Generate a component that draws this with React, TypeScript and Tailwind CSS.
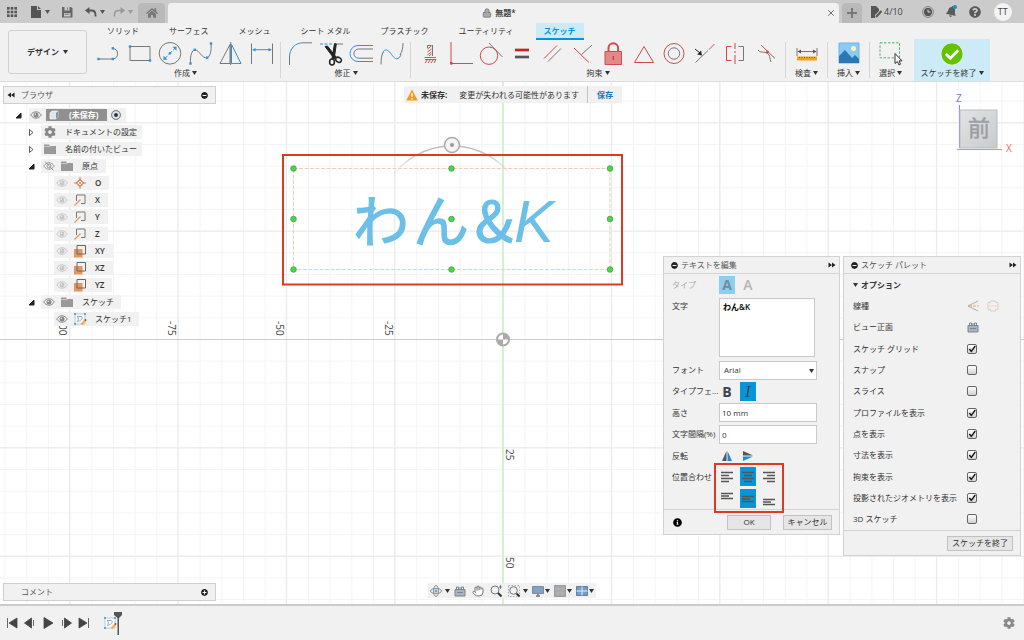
import type { ReactNode } from "react";
import { Hand, Lock, X } from "lucide-react";
import { FaBell, FaCheckCircle, FaCog, FaHome, FaInfoCircle, FaMinusCircle, FaPlusCircle, FaQuestionCircle } from "react-icons/fa";

const RED = "#d2494b";
const BLUE = "#2b95e0";
const GRAY = "#777";

const tabs = ["ソリッド", "サーフェス", "メッシュ", "シート メタル", "プラスチック", "ユーティリティ", "スケッチ"];

const options = [
  { id: "grid", label: "スケッチ グリッド", checked: true },
  { id: "snap", label: "スナップ", checked: false },
  { id: "slice", label: "スライス", checked: false },
  { id: "profile", label: "プロファイルを表示", checked: true },
  { id: "points", label: "点を表示", checked: true },
  { id: "dimensions", label: "寸法を表示", checked: true },
  { id: "constraints", label: "拘束を表示", checked: true },
  { id: "projected", label: "投影されたジオメトリを表示", checked: true },
  { id: "sketch3d", label: "3D スケッチ", checked: false },
];

function Icon({ children, className = "size-6", box = 24 }: { children: ReactNode; className?: string; box?: number }) {
  return (
    <svg viewBox={`0 0 ${box} ${box}`} className={`shrink-0 ${className}`} fill="none" stroke={GRAY} aria-hidden="true">
      {children}
    </svg>
  );
}

function Caret({ className = "text-[#333]" }: { className?: string }) {
  return (
    <svg viewBox="0 0 5 4" className={`h-1 w-[5px] shrink-0 ${className}`} fill="currentColor" aria-hidden="true">
      <path d="M0 0h5L2.500 4z" />
    </svg>
  );
}

function Dot({ x, y }: { x: number; y: number }) {
  return <rect x={x - 1.200} y={y - 1.200} width="2.400" height="2.400" fill={BLUE} stroke="none" />;
}

const createTools = [
  {
    name: "線分",
    icon: (
      <Icon>
        <path d="M1 17h15M16 6.500a5.300 5.300 0 0 1 0 10.500" />
        <Dot x={1.500} y={17} />
        <Dot x={15.800} y={17} />
        <Dot x={15.800} y={6.300} />
      </Icon>
    ),
  },
  {
    name: "長方形",
    icon: (
      <Icon>
        <path d="M2 4.500h20v14H2z" />
        <Dot x={2} y={4.500} />
        <Dot x={22} y={18.500} />
      </Icon>
    ),
  },
  {
    name: "円",
    icon: (
      <Icon>
        <circle cx="12" cy="11.300" r="10.800" />
        <path d="M6 17.300l12-12" stroke={BLUE} strokeDasharray="5 1.500" />
        <path d="M5.500 17.800v-4l4 4zM18.500 4.800v4l-4-4z" fill={BLUE} stroke="none" />
        <circle cx="12" cy="11.300" r="1.300" fill={BLUE} stroke="none" />
      </Icon>
    ),
  },
  {
    name: "スプライン",
    icon: (
      <Icon>
        <path d="M1.500 21.500C1 14 3 7.500 6 7.800c4 0 7 9 12 8 3.500-1 4.500-8 4-14" />
        <Dot x={1.500} y={21.500} />
        <Dot x={5.800} y={7.800} />
        <Dot x={18.200} y={15.700} />
        <Dot x={22} y={1.500} />
      </Icon>
    ),
  },
  {
    name: "ミラー",
    icon: (
      <Icon>
        <path d="M11 2.500v19H1z" />
        <path d="M12.500 2.500v19H22z" stroke={BLUE} />
        <path d="M11.700 0v23" />
      </Icon>
    ),
  },
  {
    name: "スケッチ寸法",
    icon: (
      <Icon>
        <path d="M1.500 1.500v20.500M22.500 1.500v20.500" />
        <path d="M3 7.700h18" stroke={BLUE} />
        <path d="M2 7.700l3.500-1.700v3.400zM22 7.700L18.500 6v3.400z" fill={BLUE} stroke="none" />
      </Icon>
    ),
  },
];

const modifyTools = [
  {
    name: "フィレット",
    icon: (
      <Icon>
        <path d="M1.500 23v-8M15 .8h9" />
        <path d="M1.500 15C1.500 7 7 .8 15 .8" stroke={BLUE} />
      </Icon>
    ),
  },
  {
    name: "トリム",
    icon: (
      <Icon>
        <path d="M1 2h12" stroke={BLUE} strokeDasharray="3 1.500" />
        <path d="M17 2h7" />
        <path d="M6 4.500l9.500 12.500 1.500-2L8.500 4zM15.500 1.500l-2.500 15 2.300-.5 2-14z" fill="#222" stroke="#222" />
        <ellipse cx="13" cy="20" rx="2.400" ry="3" stroke="#222" strokeWidth="1.500" />
        <ellipse cx="19.500" cy="17.800" rx="3" ry="2.300" stroke="#222" strokeWidth="1.500" transform="rotate(35 19.500 17.800)" />
      </Icon>
    ),
  },
  {
    name: "オフセット",
    icon: (
      <Icon>
        <path d="M24 3.500H9a8 8 0 0 0 0 16h15" stroke={BLUE} />
        <path d="M24 7H9.500a4.600 4.600 0 0 0 0 9.200H24" />
      </Icon>
    ),
  },
  {
    name: "曲線",
    icon: (
      <Icon>
        <path d="M1 22.500c0-5 .5-9 2-12M20 13c2-3 3-7 3-12" />
        <path d="M2.500 11.500c1.500-4 4-5 7-1.500 3 3 5 8 8.500 6.500 1.500-.7 2.300-2 3-4" stroke={BLUE} />
      </Icon>
    ),
  },
];

const constraintTools = [
  {
    name: "水平/垂直",
    icon: (
      <Icon>
        <path d="M9.500 3.500h4M9.500 7l4-3M9.500 10l4-3M9.500 13l4-3M11 14l2.500-2M9.500 3.500V6" stroke={RED} />
        <path d="M14.500 3v11M6.500 15.500h11.500" />
        <path d="M7 21l2.500-3.500M10 21l2.500-3.500M13 21l2.500-3.500M16 21l2-3.500M7 17.500h11" stroke={RED} />
      </Icon>
    ),
  },
  {
    name: "一致",
    icon: (
      <Icon>
        <path d="M2 0v21" stroke={RED} />
        <path d="M2 21.500h22" />
        <rect x="1" y="20" width="2.600" height="2.600" fill={RED} stroke="none" />
      </Icon>
    ),
  },
  {
    name: "接線",
    icon: (
      <Icon>
        <circle cx="10" cy="13.700" r="8.700" stroke={RED} />
        <path d="M10 1l13.500 14" />
      </Icon>
    ),
  },
  {
    name: "等しい",
    icon: (
      <Icon>
        <path d="M5 8h14" stroke="#c62127" strokeWidth="2.700" />
        <path d="M5 15h14" stroke="#555" strokeWidth="2.700" />
      </Icon>
    ),
  },
  {
    name: "平行",
    icon: (
      <Icon>
        <path d="M4 16.500L17 3.500" stroke={RED} />
        <path d="M8 19.500l13-13" />
      </Icon>
    ),
  },
  {
    name: "直交",
    icon: (
      <Icon>
        <path d="M3 6l15 14.500" stroke={RED} />
        <path d="M10.500 12.500L21 3" />
      </Icon>
    ),
  },
  {
    name: "固定",
    icon: (
      <Icon>
        <path d="M7.500 9.500V6a4.800 4.800 0 0 1 9.600 0v3.500" stroke={RED} strokeWidth="2" />
        <path d="M4 9.500h16.500v13H4z" fill="#e08a8b" stroke={RED} />
        <path d="M12.300 14v4" stroke="#c62127" />
      </Icon>
    ),
  },
  {
    name: "中点",
    icon: (
      <Icon>
        <path d="M2.500 20.500L12 4.500l9.500 16z" stroke={RED} />
      </Icon>
    ),
  },
  {
    name: "同心円",
    icon: (
      <Icon>
        <circle cx="12" cy="11.500" r="10" stroke={RED} />
        <circle cx="12" cy="11.500" r="5.700" />
      </Icon>
    ),
  },
  {
    name: "同一直線上",
    icon: (
      <Icon>
        <path d="M2.500 20.500L15 8.500" />
        <path d="M16 7.500L21.500 2" stroke={RED} />
        <path d="M2 7l5 4" stroke="#222" />
        <path d="M9 13.500l-4.800-1L8 8.500z" fill="#222" stroke="none" />
      </Icon>
    ),
  },
  {
    name: "対称",
    icon: (
      <Icon>
        <path d="M8.500 4.500h-5v14h5M12 1v6M12 9v2M12 13v9" stroke={RED} />
        <path d="M15.500 4.500h5v14h-5" />
      </Icon>
    ),
  },
  {
    name: "曲率",
    icon: (
      <Icon>
        <path d="M4 8c2 3 5 1.500 9 3 3 1.500 2.500 5 4 9" />
        <path d="M7 3l14 13.500" stroke={RED} />
        <circle cx="13.500" cy="10" r="1.500" fill={RED} stroke="none" />
      </Icon>
    ),
  },
];

function ToolGroup({ label, tools, width }: { label: string; tools: { name: string; icon: ReactNode }[]; width: string }) {
  return (
    <div className={`flex flex-col items-center gap-px ${width}`}>
      <div className="flex w-full justify-between">
        {tools.map((tool) => (
          <button key={tool.name} type="button" aria-label={tool.name}>
            {tool.icon}
          </button>
        ))}
      </div>
      <button type="button" className="flex items-center gap-[2px] leading-3">
        {label}
        <Caret />
      </button>
    </div>
  );
}

function SingleTool({ label, children, className = "w-[41px]" }: { label: string; children: ReactNode; className?: string }) {
  return (
    <button type="button" className={`flex flex-col items-center gap-px ${className}`}>
      {children}
      <span className="flex items-center gap-[2px] leading-3">
        {label}
        <Caret />
      </span>
    </button>
  );
}

function Divider() {
  return <div className="h-9 w-px shrink-0 bg-[#d5d5d5]" />;
}

function TitleBar() {
  return (
    <header className="flex h-[23px] items-end bg-[#cbcbcb] text-[#5a5a5a]">
      <div className="flex h-full w-[138px] items-center pl-[6px]">
        <button type="button" aria-label="データ パネル">
          <Icon box={12} className="size-3">
            {[1, 4.700, 8.400].map((y) =>
              [1, 4.700, 8.400].map((x) => (
                <rect key={`${x}-${y}`} x={x} y={y} width="2.600" height="2.600" fill="#555" stroke="none" />
              )),
            )}
          </Icon>
        </button>
        <button type="button" aria-label="ファイル" className="ml-3 flex items-center gap-[3px]">
          <Icon box={12} className="size-3">
            <path d="M1 0h6v4h4v8H1zM8 0l3 3H8z" fill="#555" stroke="none" />
          </Icon>
          <Caret className="text-[#555]" />
        </button>
        <button type="button" aria-label="保存" className="ml-[11px]">
          <Icon box={12} className="size-3">
            <path d="M1 1h9l1.500 1.500v9H1z" fill="#666" stroke="none" />
            <path d="M3.500 1h5v3.500h-5zM3 7h6.500v3.500H3z" fill="#cbcbcb" stroke="none" />
            <path d="M3.500 8.200h5M6.500 1.500v2" />
          </Icon>
        </button>
        <button type="button" aria-label="元に戻す" className="ml-3 flex items-center gap-[3px]">
          <Icon box={12} className="size-3">
            <path d="M3 4.500h3.500c3 0 4 2 4 4.500v1.500" stroke="#555" strokeWidth="1.800" />
            <path d="M0 4.500L4.500 1v7z" fill="#555" stroke="none" />
          </Icon>
          <Caret className="text-[#555]" />
        </button>
        <button type="button" aria-label="やり直し" className="ml-2 flex items-center gap-[3px]">
          <Icon box={12} className="size-3">
            <path d="M9 4.500H5.500c-3 0-4 2-4 4.500v1.500" stroke="#999" strokeWidth="1.500" />
            <path d="M12 4.500L7.500 1v7z" fill="#999" stroke="none" />
          </Icon>
          <Caret className="text-[#999]" />
        </button>
      </div>
      <button type="button" aria-label="ホーム" className="flex h-5 w-[27px] items-center justify-center rounded-t bg-[#b9b9b9]">
        <FaHome className="size-3 text-[#777]" />
      </button>
      <div className="ml-[3px] flex h-5 flex-1 items-center justify-center rounded-t bg-[#f1f1f1] pr-[3px]">
        <div className="flex flex-1 items-center justify-center gap-[3px] pl-1 text-[8px] font-semibold text-[#444]">
          <Lock className="size-[10px] fill-[#aaa] text-[#777]" />
          無題*
        </div>
        <button type="button" aria-label="閉じる">
          <X className="size-[10px] text-[#555]" />
        </button>
      </div>
      <button type="button" aria-label="新しいデザイン" className="ml-[3px] flex h-5 w-5 items-center justify-center rounded-t bg-[#b9b9b9]">
        <Icon box={10} className="size-[10px]">
          <path d="M5 0v10M0 5h10" strokeWidth="2" />
        </Icon>
      </button>
      <div className="flex h-full w-[162px] items-center pl-2">
        <button type="button" className="flex items-center gap-[2px] text-[9px] text-[#444]">
          <Icon box={12} className="size-3">
            <path d="M1 0h5l3 3v2L5 9v3H1z" fill="#555" stroke="none" />
            <path d="M6 11l5.500-6" stroke="#555" strokeWidth="2" />
          </Icon>
          4/10
        </button>
        <button type="button" aria-label="ジョブ ステータス" className="ml-[19px]">
          <Icon box={12} className="size-3">
            <circle cx="6" cy="6" r="5.500" stroke="#777" strokeWidth=".8" />
            <circle cx="6" cy="6" r="4.200" fill="#555" stroke="none" />
            <path d="M6 3.500V6h2.500" stroke="#ddd" />
          </Icon>
        </button>
        <button type="button" aria-label="通知" className="relative ml-3">
          <FaBell className="size-[11px] rotate-12" />
          <span className="absolute -top-px right-0 size-1 rounded-full bg-[#0696d7]" />
        </button>
        <button type="button" aria-label="ヘルプ" className="ml-3">
          <FaQuestionCircle className="size-3" />
        </button>
        <button type="button" className="ml-[13px] size-[18px] rounded-full bg-[#f3f3f3] text-[9px] leading-[18px] text-[#444]">
          TT
        </button>
      </div>
    </header>
  );
}

function Toolbar() {
  return (
    <div className="flex h-[59px] border-b border-[#dcdcdc] bg-[#f1f1f1]">
      <button
        type="button"
        className="mt-[7px] ml-2 flex h-11 w-[79px] shrink-0 items-center justify-center gap-1 rounded-[3px] border border-[#d0d0d0] font-bold"
      >
        デザイン
        <Caret />
      </button>
      <div className="ml-[10px] flex flex-1 flex-col">
        <nav className="flex gap-[14px] pl-[2px]">
          {tabs.map((tab) => (
            <button
              key={tab}
              type="button"
              className={
                tab === "スケッチ"
                  ? "h-[17px] border-b-2 border-[#0696d7] bg-[#cdeaf7] px-2 font-bold text-[#0696d7]"
                  : "h-[17px] border-b-2 border-transparent px-2"
              }
            >
              {tab}
            </button>
          ))}
        </nav>
        <div className="flex flex-1">
          <div className="flex pt-[2px]">
            <ToolGroup label="作成" tools={createTools} width="mr-[6px] w-[177px]" />
            <Divider />
            <ToolGroup label="修正" tools={modifyTools} width="mr-[6px] ml-[7px] w-[116px]" />
            <Divider />
            <ToolGroup label="拘束" tools={constraintTools} width="mx-[7px] w-[360px]" />
            <Divider />
            <SingleTool label="検査">
              <Icon>
                <path d="M2 6v8M22 6v8M3 9.500h18" />
                <path d="M2.500 9.500L6 7.500v4zM21.500 9.500L18 7.500v4z" fill="#555" stroke="none" />
                <path d="M2 14.500h20v4H2z" fill="#f5a11c" stroke="none" />
                <path d="M4 15.500h17" stroke="#8a5a10" strokeDasharray="1 1.500" />
              </Icon>
            </SingleTool>
            <Divider />
            <SingleTool label="挿入">
              <Icon>
                <path d="M2 1h20v20H2z" fill="#8bcaf5" stroke="#73b5e3" />
                <path d="M2 14l6-6 7 8 3-3 4 4v4H2z" fill="#2b78b4" stroke="none" />
                <circle cx="16.500" cy="6.500" r="2.500" fill="#fff6b5" stroke="none" />
              </Icon>
            </SingleTool>
            <Divider />
            <SingleTool label="選択">
              <Icon>
                <path d="M1 .800h19.500v15H1z" stroke="#46bd68" strokeDasharray="2.500 1.500" />
                <path d="M16 11.500v10l2.300-2 1.700 3.500 1.500-.8-1.500-3.300h3z" fill="#fff" stroke="#333" />
              </Icon>
            </SingleTool>
          </div>
          <SingleTool label="スケッチを終了" className="-mt-px ml-[3px] w-[76px] bg-[#cdeaf7] pt-[3px]">
            <FaCheckCircle className="size-6 rounded-full border border-[#cdeaf7] bg-white text-[#62c400]" />
          </SingleTool>
        </div>
      </div>
    </div>
  );
}

function Eye({ tone = "#888" }: { tone?: string }) {
  return (
    <Icon box={12} className="size-3">
      <path d="M.7 6C3.500 1.700 8.500 1.700 11.300 6 8.500 10.300 3.500 10.300.7 6z" stroke={tone} fill="#f1f1f1" />
      <circle cx="6" cy="6" r="2.500" fill={tone} stroke="none" />
      <circle cx="5.300" cy="5.300" r=".7" fill="#eee" stroke="none" />
    </Icon>
  );
}

function HiddenEye() {
  return (
    <Icon box={12} className="size-3">
      <path d="M.7 6C3.500 1.700 8.500 1.700 11.300 6 8.500 10.300 3.500 10.300.7 6z" stroke="#888" strokeWidth=".8" />
      <circle cx="6" cy="6" r="2" stroke="#888" strokeWidth=".8" />
      <path d="M2 1.500l8.500 9" stroke="#888" strokeWidth=".8" />
    </Icon>
  );
}

function Folder() {
  return (
    <Icon box={12} className="size-3">
      <path d="M0 1.500h5l1 1.500h6v8H0z" fill="#999" stroke="none" />
      <path d="M0 3.500h6.500" stroke="#ddd" strokeWidth=".7" />
    </Icon>
  );
}

function SketchIcon() {
  return (
    <Icon box={14} className="size-[14px]">
      <path d="M2 2h10v10H2z" stroke="#9fc6df" fill="#fafcfe" strokeWidth=".8" />
      <path d="M4 4.500h4.500c2 2-1 4.500-4 5 1-2 1-3 0-5z" stroke="#7d95a8" strokeWidth=".8" />
      <path d="M8.500 12.500l3.500-4" stroke="#f3b23b" strokeWidth="2" />
      <circle cx="12.500" cy="8" r="1" fill="#d33" stroke="none" />
      <path d="M1 1h2v2H1zM11 1h2v2h-2zM1 11h2v2H1z" fill="#5ba9dc" stroke="none" />
    </Icon>
  );
}

function Twisty({ open = false }: { open?: boolean }) {
  return (
    <Icon box={7} className="size-[7px]">
      {open ? <path d="M6 1v5H1z" fill="#222" stroke="#222" /> : <path d="M1.500.5L5 3.500l-3.500 3z" stroke="#333" strokeWidth=".8" />}
    </Icon>
  );
}

const axisIcon = (
  <Icon box={14} className="size-[14px]">
    <path d="M3.500 2h8.500v8.500H8M3.500 2v6" />
    <path d="M1.500 12.500l6-6" stroke="#e79a68" strokeWidth="1.300" />
  </Icon>
);

const planeIcon = (
  <Icon box={14} className="size-[14px]">
    <path d="M1 5h8.500v8.500H1z" fill="#e59560" stroke="none" />
    <path d="M4 10V1.500h8.500V10z" stroke="#666" />
  </Icon>
);

const originIcon = (
  <Icon box={14} className="size-[14px]">
    <path d="M7 1v12M1 7h12" stroke="#d88455" />
    <path d="M7 3.500L10.500 7 7 10.500 3.500 7z" fill="#fff" stroke="#d88455" strokeWidth="1.300" />
    <circle cx="7" cy="7" r="1" fill="#d88455" stroke="none" />
  </Icon>
);

const originItems = [
  { name: "O", icon: originIcon },
  { name: "X", icon: axisIcon },
  { name: "Y", icon: axisIcon },
  { name: "Z", icon: axisIcon },
  { name: "XY", icon: planeIcon },
  { name: "XZ", icon: planeIcon },
  { name: "YZ", icon: planeIcon },
];

function Browser() {
  return (
    <aside className="absolute top-1 left-[3px] w-[213px]">
      <div className="flex h-[18px] items-center border border-[#cfcfcf] bg-[#f1f1f1] pr-[7px] pl-[3px]">
        <button type="button" aria-label="折りたたむ">
          <Icon box={8} className="size-2">
            <path d="M4 1.500v5L.5 4zM7.500 1.500v5L4 4z" fill="#222" stroke="none" />
          </Icon>
        </button>
        <h2 className="ml-[6px] flex-1 text-[#555]">ブラウザ</h2>
        <FaMinusCircle className="size-[7px] text-[#222]" />
      </div>
      <ul className="mt-1 flex flex-col gap-[3px]">
        <li className="ml-3 flex h-[14px] items-center gap-[7px]">
          <Twisty open />
          <div className="flex h-full items-center gap-1 bg-[#f1f1f1] px-[1px]">
            <Eye />
            <div className="flex h-3 w-[61px] items-center bg-[#909090] pl-[3px] font-bold text-white">
              <Icon box={10} className="size-[10px]">
                <path d="M1 3l2-2h6v6L7 9H1z" fill="#dde6ee" stroke="#fff" strokeWidth=".6" />
                <path d="M7 3l2-2v6L7 9z" fill="#8796a5" stroke="none" />
              </Icon>
              <span className="ml-[10px]">(未保存)</span>
            </div>
            <input
              type="radio"
              defaultChecked
              aria-label="アクティブ"
              className="mr-1 size-[10px] appearance-none rounded-full border border-[#888] bg-[#dde6f0] checked:bg-[#333] checked:shadow-[inset_0_0_0_2px_#dde6f0]"
            />
          </div>
        </li>
        <li className="ml-[25px] flex h-[14px] items-center gap-[6px]">
          <Twisty />
          <div className="flex h-full w-[101px] items-center gap-[9px] bg-[#f1f1f1] pl-[3px]">
            <FaCog className="size-3 text-[#888]" />
            ドキュメントの設定
          </div>
        </li>
        <li className="ml-[25px] flex h-[14px] items-center gap-[6px]">
          <Twisty />
          <div className="flex h-full w-[101px] items-center gap-[9px] bg-[#f1f1f1] pl-[3px]">
            <Folder />
            名前の付いたビュー
          </div>
        </li>
        <li className="ml-[25px] flex h-[14px] items-center gap-[6px]">
          <Twisty open />
          <div className="flex h-full items-center bg-[#f1f1f1] pr-2 pl-[2px]">
            <HiddenEye />
            <span className="ml-[6px] flex items-center gap-[9px]">
              <Folder />
              原点
            </span>
          </div>
        </li>
        {originItems.map((item) => (
          <li key={item.name} className="ml-[51px] flex h-[14px] w-fit items-center bg-[#f1f1f1] pr-2 pl-[2px] font-semibold">
            <Eye tone="#c8c8c8" />
            <span className="mr-2 ml-[5px]">{item.icon}</span>
            {item.name}
          </li>
        ))}
        <li className="ml-[25px] flex h-[14px] items-center gap-[6px]">
          <Twisty open />
          <div className="flex h-full items-center bg-[#f1f1f1] pr-[7px] pl-[2px]">
            <Eye />
            <span className="ml-[6px] flex items-center gap-[9px]">
              <Folder />
              スケッチ
            </span>
          </div>
        </li>
        <li className="ml-[51px] flex h-[14px] w-fit items-center bg-[#f1f1f1] pr-[7px] pl-[2px]">
          <Eye />
          <span className="mr-2 ml-[5px]">
            <SketchIcon />
          </span>
          スケッチ1
        </li>
      </ul>
    </aside>
  );
}

const handles = [
  [293.500, 168.500],
  [451.500, 168.500],
  [610, 168.500],
  [293.500, 219],
  [451.500, 219],
  [610, 219],
  [293.500, 269.500],
  [451.500, 269.500],
  [610, 269.500],
];

const rulerLabels = [
  { text: "00", x: 59, y: 324 },
  { text: "-75", x: 168, y: 321 },
  { text: "-50", x: 276, y: 321 },
  { text: "-25", x: 385, y: 321 },
  { text: "25", x: 506, y: 449 },
  { text: "50", x: 506, y: 557 },
];

function SketchCanvas() {
  return (
    <svg viewBox="0 82 1024 522" preserveAspectRatio="xMidYMid slice" className="absolute inset-0 size-full">
      <defs>
        <pattern id="minor" x="503" y="339" width="21.670" height="21.670" patternUnits="userSpaceOnUse">
          <path d="M0 0h21.670M0 0v21.670" stroke="#f4f4f4" strokeWidth="2" />
        </pattern>
        <pattern id="major" x="502.500" y="339" width="108.350" height="108.350" patternUnits="userSpaceOnUse">
          <path d="M0 0h108.350M0 0v108.350" stroke="#e9e9e9" strokeWidth="2" />
        </pattern>
        <linearGradient id="arc">
          <stop offset="0" stopColor="#aaa" stopOpacity="0" />
          <stop offset=".3" stopColor="#bbb" />
          <stop offset=".7" stopColor="#bbb" />
          <stop offset="1" stopColor="#aaa" stopOpacity="0" />
        </linearGradient>
      </defs>
      <rect y="82" width="1024" height="522" fill="#fff" />
      <rect y="82" width="1024" height="522" fill="url(#minor)" />
      <rect y="82" width="1024" height="522" fill="url(#major)" />
      <path d="M503 82v522" stroke="#d2f2d2" strokeWidth="2" />
      <path d="M0 339.500h1024" stroke="#eebfc1" />

      <circle cx="503" cy="339.500" r="6" fill="#fff" stroke="#aaa" strokeWidth="2" />
      <path d="M503 339.500v-5.500a5.500 5.500 0 0 1 5.500 5.500zM503 339.500v5.500a5.500 5.500 0 0 1-5.500-5.500z" fill="#aaa" />

      {rulerLabels.map((label) => (
        <text key={label.text} transform={`translate(${label.x} ${label.y}) rotate(90)`} fontSize="10" fill="#444">
          {label.text}
        </text>
      ))}

      <text
        x="353"
        y="242"
        fontSize="56"
        fill="#6bbfe8"
        stroke="#6bbfe8"
        strokeWidth="1.200"
        fontFamily="Noto Sans CJK JP, sans-serif"
      >
        <tspan>わ</tspan>
        <tspan x="413">ん</tspan>
        <tspan x="475">&amp;</tspan>
        <tspan x="514" fontSize="60" fontStyle="italic" fontFamily="Liberation Sans, sans-serif" strokeWidth="0">
          K
        </tspan>
      </text>

      <path d="M391 178A74 74 0 0 1 513 178" fill="none" stroke="url(#arc)" strokeWidth="1.500" />
      <circle cx="452" cy="145" r="7.500" fill="#f4f4f4" stroke="#aaa" strokeWidth="1.500" />
      <circle cx="452" cy="145" r="2" fill="#999" />
      <path d="M293.500 168.500H610v101H293.500z" fill="none" stroke="#f2cdb3" strokeDasharray="4 1.500" />
      {handles.map(([x, y]) => (
        <circle key={`${x}-${y}`} cx={x} cy={y} r="2.800" fill="#3be03b" stroke="#5c8f5c" strokeWidth=".8" />
      ))}
      <path d="M283 155h339v129.500H283z" fill="none" stroke="#dc3a22" strokeWidth="2" />
    </svg>
  );
}

function UnsavedNotice() {
  return (
    <div role="status" className="absolute top-1 left-[404px] flex h-[17px] items-center bg-[#f1f1f1]">
      <Icon box={12} className="ml-[2px] size-3">
        <path d="M6 .5L11.800 11.500H.2z" fill="#f59b16" stroke="none" />
        <path d="M6 4v4M6 9v1.500" stroke="#fff" strokeWidth="1.300" />
      </Icon>
      <strong className="ml-[3px]">未保存:</strong>
      <span className="ml-3 whitespace-nowrap">変更が失われる可能性があります</span>
      <button type="button" className="ml-2 h-full border-l border-[#c4c4c4] px-[9px] font-semibold text-[#1277b5]">
        保存
      </button>
    </div>
  );
}

function ViewCube() {
  return (
    <svg viewBox="0 0 66 72" className="absolute top-[7px] right-[5px] h-[72px] w-[66px]" role="img" aria-label="ViewCube">
      <defs>
        <linearGradient id="face" x1="0" y1="0" x2="1" y2="1">
          <stop offset="0" stopColor="#e3e4e6" />
          <stop offset="1" stopColor="#c9cacd" />
        </linearGradient>
      </defs>
      <path d="M6.500 16v43" stroke="#8c86e0" />
      <path d="M4 60.500h45" stroke="#ec8a84" />
      <rect x="7" y="21" width="37" height="38" fill="url(#face)" stroke="#b9bbbe" />
      <text x="15" y="47" fontSize="22" fill="#9b9ea3" stroke="#9b9ea3" strokeWidth=".5">
        前
      </text>
      <text x="3" y="13" fontSize="10" fill="#7a72e0">
        Z
      </text>
      <text x="53" y="63" fontSize="10" fill="#ea6e66">
        X
      </text>
    </svg>
  );
}

function PanelHeader({ title }: { title: string }) {
  return (
    <div className="flex h-[17px] items-center border-b border-[#d2d2d2] px-[7px]">
      <FaMinusCircle className="size-[7px] text-[#222]" />
      <h2 className="ml-[3px] flex-1 text-[#555]">{title}</h2>
      <button type="button" aria-label="展開" className="-mr-1">
        <Icon box={8} className="size-2">
          <path d="M.5 1.500v5L4 4zM4 1.500v5L7.500 4z" fill="#222" stroke="none" />
        </Icon>
      </button>
    </div>
  );
}

const alignButtons = [
  [
    { name: "左揃え", active: false, d: "M2 5.500h12M2 8.500h8M2 11.500h12M2 14.500h8" },
    { name: "中央揃え", active: true, d: "M2 5.500h12M4 8.500h8M2 11.500h12M4 14.500h8" },
    { name: "右揃え", active: false, d: "M2 5.500h12M6 8.500h8M2 11.500h12M6 14.500h8" },
  ],
  [
    { name: "上揃え", active: false, d: "M2 4.500h12M2 7h8M2 9.500h12" },
    { name: "中段揃え", active: true, d: "M2 7.500h12M2 10h8M2 12.500h12" },
    { name: "下揃え", active: false, d: "M2 10.500h12M2 13h8M2 15.500h12" },
  ],
];

function AlignRow({ row }: { row: number }) {
  return (
    <div className="flex gap-[5px]">
      {alignButtons[row].map((button) => (
        <button
          key={button.name}
          type="button"
          aria-label={button.name}
          className={button.active ? "h-[19px] w-4 bg-[#0696d7]" : "h-[19px] w-4"}
        >
          <svg viewBox="0 0 16 19" className="h-[19px] w-4" stroke="#555" strokeWidth="1.300" aria-hidden="true">
            <path d={button.d} />
          </svg>
        </button>
      ))}
    </div>
  );
}

function TextPanel() {
  return (
    <section className="absolute top-[174px] right-[184px] w-[177px] border border-[#d2d2d2] bg-[#f1f1f1]">
      <PanelHeader title="テキストを編集" />
      <div className="grid h-[235px] auto-rows-fr grid-cols-[47px_98px] items-center pl-2">
        <span className="text-[#aaa]">タイプ</span>
        <div className="flex gap-[5px] text-sm leading-[18px] font-bold">
          <button type="button" aria-label="テキスト" className="w-4 bg-[#8fcdec] text-[#6c8ea0]">
            A
          </button>
          <button type="button" aria-label="パス上のテキスト" className="w-4 font-semibold text-[#b5b5b5]">
            A
          </button>
        </div>

        <label htmlFor="text">文字</label>
        <textarea
          id="text"
          defaultValue="わん&K"
          className="row-span-3 h-[59px] w-24 resize-none border border-[#c9c9c9] bg-white px-[3px] py-[2px] font-semibold text-black outline-none"
        />
        <span className="row-span-2" />

        <label htmlFor="font">フォント</label>
        <div className="relative">
          <select id="font" defaultValue="Arial" className="h-[19px] w-full appearance-none border border-[#c9c9c9] bg-white px-1">
            <option>Arial</option>
          </select>
          <span className="pointer-events-none absolute top-2 right-[3px]">
            <Caret />
          </span>
        </div>

        <span className="whitespace-nowrap">タイプフェ...</span>
        <div className="flex gap-[5px] text-sm leading-[19px] text-[#3c4450]">
          <button type="button" aria-label="太字" className="w-4 font-bold">
            B
          </button>
          <button type="button" aria-label="斜体" className="w-4 bg-[#0696d7] font-['Liberation_Serif',serif] text-base leading-[19px] italic">
            I
          </button>
        </div>

        <label htmlFor="height">高さ</label>
        <input id="height" defaultValue="10 mm" className="h-[19px] w-full border border-[#c9c9c9] bg-white px-[2px] outline-none" />

        <label htmlFor="spacing" className="whitespace-nowrap">
          文字間隔(%)
        </label>
        <input id="spacing" defaultValue="0" className="h-[19px] w-full border border-[#c9c9c9] bg-white px-[2px] outline-none" />

        <span>反転</span>
        <div className="flex gap-[5px]">
          <button type="button" aria-label="左右反転">
            <Icon box={16} className="size-4">
              <path d="M7.500 3v10H3z" fill="#555" stroke="none" />
              <path d="M8.500 3v10H13z" fill="#1d8be0" stroke="none" />
            </Icon>
          </button>
          <button type="button" aria-label="上下反転">
            <Icon box={16} className="size-4">
              <path d="M3 7.500V3l10 4.500z" fill="#555" stroke="none" />
              <path d="M3 8.500V13l10-4.500z" fill="#1d8be0" stroke="none" />
            </Icon>
          </button>
        </div>

        <span className="whitespace-nowrap">位置合わせ</span>
        <AlignRow row={0} />
        <span />
        <AlignRow row={1} />
      </div>
      <div className="pointer-events-none absolute top-[206px] left-[50px] h-[50px] w-[70px] border-2 border-[#dc3a22]" />
      <div className="flex h-[25px] items-center border-t border-[#d2d2d2] pr-[7px] pl-[9px]">
        <FaInfoCircle className="size-[9px] text-black" />
        <button type="button" className="ml-auto h-[15px] w-11 border border-[#c2c2c2] bg-[#e6e6e6]">
          OK
        </button>
        <button type="button" className="ml-3 h-[15px] w-[49px] border border-[#c2c2c2] bg-[#e6e6e6]">
          キャンセル
        </button>
      </div>
    </section>
  );
}

function CheckBox({ id, checked }: { id: string; checked: boolean }) {
  return (
    <span className="relative size-[10px]">
      <input
        id={id}
        type="checkbox"
        defaultChecked={checked}
        className="peer block size-[10px] appearance-none rounded-[2px] border border-[#666] bg-linear-to-b from-white to-[#d0d0d0]"
      />
      <svg viewBox="0 0 10 10" className="pointer-events-none absolute inset-0 hidden size-[10px] peer-checked:block" fill="none" aria-hidden="true">
        <path d="M2.300 5l2 2.500L8.300 2" stroke="#111" strokeWidth="1.300" />
      </svg>
    </span>
  );
}

function SketchPalette() {
  return (
    <section className="absolute top-[174px] right-[3px] w-[178px] border border-[#d2d2d2] bg-[#f1f1f1]">
      <PanelHeader title="スケッチ パレット" />
      <div className="grid h-[256px] auto-rows-fr items-center pr-2 pl-[9px]">
        <button type="button" className="flex items-center gap-[3px] font-bold">
          <Caret />
          オプション
        </button>
        <div className="grid grid-cols-[114px_1fr] items-center">
          <span>線種</span>
          <div className="flex gap-2">
            <button type="button" aria-label="コンストラクション">
              <Icon box={12} className="size-3">
                <path d="M11 1L1 6l10 5" stroke="#b5aaa4" />
                <path d="M2 6h10" stroke="#f0a070" strokeDasharray="3 1" />
              </Icon>
            </button>
            <button type="button" aria-label="中心線">
              <Icon box={12} className="size-3">
                <path d="M3.500 1h5v1.500H11v7H8.500V11h-5V9.500H1v-7h2.500z" stroke="#d5d0cc" />
                <path d="M0 6h12" stroke="#f5cdb5" strokeDasharray="3 1" />
              </Icon>
            </button>
          </div>
        </div>
        <div className="grid grid-cols-[114px_1fr] items-center">
          <span>ビュー正面</span>
          <button type="button" aria-label="ビュー正面">
            <LookAt />
          </button>
        </div>
        {options.map((option) => (
          <div key={option.id} className="grid grid-cols-[114px_1fr] items-center">
            <label htmlFor={option.id}>{option.label}</label>
            <CheckBox id={option.id} checked={option.checked} />
          </div>
        ))}
      </div>
      <div className="flex h-[25px] items-center justify-end border-t border-[#d2d2d2] pr-[7px]">
        <button type="button" className="h-[15px] w-[66px] border border-[#c2c2c2] bg-[#e6e6e6]">
          スケッチを終了
        </button>
      </div>
    </section>
  );
}

function LookAt() {
  return (
    <Icon box={12} className="size-3">
      <path d="M1 4.500h10v6.500H1z" fill="#aab4c0" stroke="#7d8791" />
      <path d="M2.500 4V2h2v2M7.500 4V2h2v2M4.500 3h3M3 7.500h6" stroke="#7d8791" />
    </Icon>
  );
}

function NavigationBar() {
  return (
    <nav className="absolute bottom-[6px] left-[428px] flex h-[15px] items-center bg-[#f1f1f1] px-[2px]">
      <button type="button" aria-label="オービット" className="flex items-center gap-[3px]">
        <Icon box={12} className="size-3">
          <ellipse cx="6" cy="6" rx="5.500" ry="2.500" strokeWidth=".8" />
          <ellipse cx="6" cy="6" rx="2.500" ry="5.500" strokeWidth=".8" />
          <path d="M6 4.500v3M4.500 6h3" stroke={BLUE} />
        </Icon>
        <Caret />
      </button>
      <button type="button" aria-label="ビュー正面" className="ml-1">
        <LookAt />
      </button>
      <button type="button" aria-label="画面移動" className="ml-[6px]">
        <Hand className="size-3 fill-white text-[#777]" />
      </button>
      <button type="button" aria-label="ズーム" className="ml-[6px]">
        <Icon box={12} className="size-3">
          <circle cx="5" cy="5" r="4" fill="#eef3f7" />
          <path d="M8 8l3.500 3.500" stroke="#333" strokeWidth="2" />
          <path d="M10.500 0v4M9 2h3" stroke="#555" strokeWidth=".7" />
        </Icon>
      </button>
      <button type="button" aria-label="窓ズーム" className="ml-[6px] flex items-center gap-[3px]">
        <Icon box={12} className="size-3">
          <path d="M.5.500h11v11H.5z" strokeDasharray="1.500 1.500" stroke="#aaa" />
          <circle cx="5.500" cy="5.500" r="3.800" fill="#eef3f7" />
          <path d="M8.500 8.500l3 3" stroke="#333" strokeWidth="2" />
        </Icon>
        <Caret />
      </button>
      <button type="button" aria-label="表示設定" className="ml-1 flex items-center gap-px">
        <Icon box={12} className="size-3">
          <path d="M.5 1.500h11v7H.5z" fill="#7ba3d0" stroke="#888" />
          <path d="M4 11h4M6 9v2" strokeWidth="1.500" />
        </Icon>
        <Caret />
      </button>
      <button type="button" aria-label="グリッドとスナップ" className="ml-1 flex items-center gap-px">
        <Icon box={12} className="size-3">
          <path d="M.5.500h11v11H.5z" fill="#a4a8ad" stroke="#999" />
          <path d="M.5 4h11M4 .5v11M8 .5v11M.5 8h11" stroke="#bbb" strokeWidth=".6" />
        </Icon>
        <Caret />
      </button>
      <button type="button" aria-label="ビューポート" className="ml-1 flex items-center gap-px">
        <Icon box={12} className="size-3">
          <path d="M.5 1.500h11v9H.5z" fill="#6d9fd6" stroke="#6a7d92" />
          <path d="M6 1.500v9M.5 6h11" stroke="#eee" />
        </Icon>
        <Caret />
      </button>
    </nav>
  );
}

const playback = [
  { name: "先頭へ", d: "M1.500 1v10M11 1v10L3 6z" },
  { name: "前へ", d: "M7.500 1v10L.5 6zM9.500 3v6" },
  { name: "再生", d: "M2 .5v11L11 6z" },
  { name: "次へ", d: "M4.500 1v10l7-5zM2.500 3v6" },
  { name: "末尾へ", d: "M10.500 1v10M1 1v10l8-5z" },
];

function Timeline() {
  return (
    <footer className="flex h-9 items-center border-t-2 border-[#cbcbcb] bg-[#f1f1f1] pr-[9px] pl-[6px]">
      <div className="flex gap-[6px]">
        {playback.map((item) => (
          <button key={item.name} type="button" aria-label={item.name}>
            <Icon box={12} className="size-3">
              <path d={item.d} fill="#444" stroke="#444" strokeWidth=".8" />
            </Icon>
          </button>
        ))}
      </div>
      <div className="ml-[13px] flex items-center">
        <SketchIcon />
        <svg viewBox="0 0 10 24" className="-ml-1 h-6 w-[10px]" fill="#555" aria-hidden="true">
          <path d="M1 1h8v3L6 7v17H4.500V7L1 4z" />
        </svg>
      </div>
      <button type="button" aria-label="設定" className="ml-auto">
        <FaCog className="size-3 text-[#888]" />
      </button>
    </footer>
  );
}

export default function App() {
  return (
    <div className="flex h-screen flex-col overflow-hidden bg-[#f1f1f1] font-['Open_Sans','Noto_Sans_CJK_JP',sans-serif] text-[8px] leading-3 text-[#333]">
      <TitleBar />
      <Toolbar />
      <main className="relative flex-1 overflow-hidden">
        <SketchCanvas />
        <Browser />
        <UnsavedNotice />
        <ViewCube />
        <TextPanel />
        <SketchPalette />
        <div className="absolute bottom-[3px] left-[3px] flex h-[18px] w-[213px] items-center justify-between border border-[#cfcfcf] bg-[#f1f1f1] pr-[7px] pl-[17px] text-[#555]">
          <h2>コメント</h2>
          <FaPlusCircle className="size-[7px] text-[#222]" />
        </div>
        <NavigationBar />
      </main>
      <Timeline />
    </div>
  );
}
